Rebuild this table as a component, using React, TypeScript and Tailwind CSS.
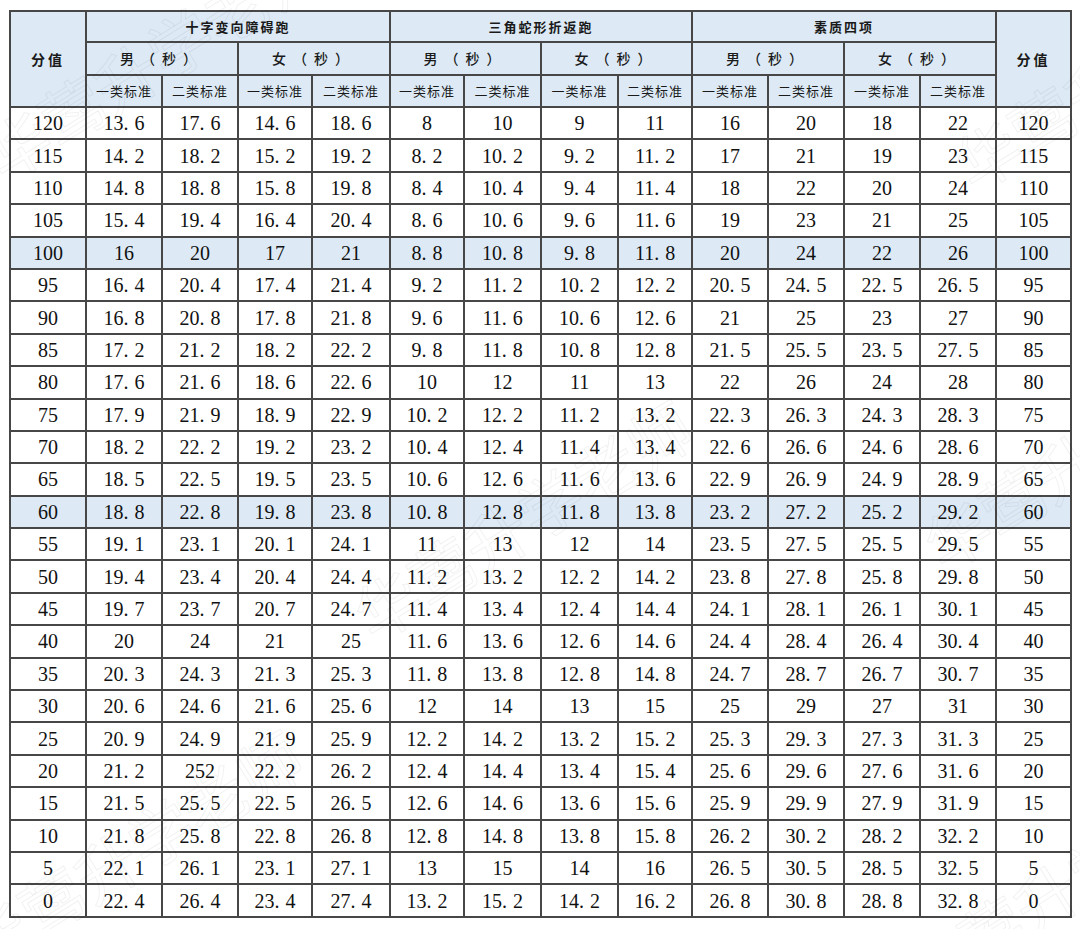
import React from "react";

const rows: string[][] = [
  ["120", "13.6", "17.6", "14.6", "18.6", "8", "10", "9", "11", "16", "20", "18", "22"],
  ["115", "14.2", "18.2", "15.2", "19.2", "8.2", "10.2", "9.2", "11.2", "17", "21", "19", "23"],
  ["110", "14.8", "18.8", "15.8", "19.8", "8.4", "10.4", "9.4", "11.4", "18", "22", "20", "24"],
  ["105", "15.4", "19.4", "16.4", "20.4", "8.6", "10.6", "9.6", "11.6", "19", "23", "21", "25"],
  ["100", "16", "20", "17", "21", "8.8", "10.8", "9.8", "11.8", "20", "24", "22", "26"],
  ["95", "16.4", "20.4", "17.4", "21.4", "9.2", "11.2", "10.2", "12.2", "20.5", "24.5", "22.5", "26.5"],
  ["90", "16.8", "20.8", "17.8", "21.8", "9.6", "11.6", "10.6", "12.6", "21", "25", "23", "27"],
  ["85", "17.2", "21.2", "18.2", "22.2", "9.8", "11.8", "10.8", "12.8", "21.5", "25.5", "23.5", "27.5"],
  ["80", "17.6", "21.6", "18.6", "22.6", "10", "12", "11", "13", "22", "26", "24", "28"],
  ["75", "17.9", "21.9", "18.9", "22.9", "10.2", "12.2", "11.2", "13.2", "22.3", "26.3", "24.3", "28.3"],
  ["70", "18.2", "22.2", "19.2", "23.2", "10.4", "12.4", "11.4", "13.4", "22.6", "26.6", "24.6", "28.6"],
  ["65", "18.5", "22.5", "19.5", "23.5", "10.6", "12.6", "11.6", "13.6", "22.9", "26.9", "24.9", "28.9"],
  ["60", "18.8", "22.8", "19.8", "23.8", "10.8", "12.8", "11.8", "13.8", "23.2", "27.2", "25.2", "29.2"],
  ["55", "19.1", "23.1", "20.1", "24.1", "11", "13", "12", "14", "23.5", "27.5", "25.5", "29.5"],
  ["50", "19.4", "23.4", "20.4", "24.4", "11.2", "13.2", "12.2", "14.2", "23.8", "27.8", "25.8", "29.8"],
  ["45", "19.7", "23.7", "20.7", "24.7", "11.4", "13.4", "12.4", "14.4", "24.1", "28.1", "26.1", "30.1"],
  ["40", "20", "24", "21", "25", "11.6", "13.6", "12.6", "14.6", "24.4", "28.4", "26.4", "30.4"],
  ["35", "20.3", "24.3", "21.3", "25.3", "11.8", "13.8", "12.8", "14.8", "24.7", "28.7", "26.7", "30.7"],
  ["30", "20.6", "24.6", "21.6", "25.6", "12", "14", "13", "15", "25", "29", "27", "31"],
  ["25", "20.9", "24.9", "21.9", "25.9", "12.2", "14.2", "13.2", "15.2", "25.3", "29.3", "27.3", "31.3"],
  ["20", "21.2", "252", "22.2", "26.2", "12.4", "14.4", "13.4", "15.4", "25.6", "29.6", "27.6", "31.6"],
  ["15", "21.5", "25.5", "22.5", "26.5", "12.6", "14.6", "13.6", "15.6", "25.9", "29.9", "27.9", "31.9"],
  ["10", "21.8", "25.8", "22.8", "26.8", "12.8", "14.8", "13.8", "15.8", "26.2", "30.2", "28.2", "32.2"],
  ["5", "22.1", "26.1", "23.1", "27.1", "13", "15", "14", "16", "26.5", "30.5", "28.5", "32.5"],
  ["0", "22.4", "26.4", "23.4", "27.4", "13.2", "15.2", "14.2", "16.2", "26.8", "30.8", "28.8", "32.8"],
];

const widths = [76, 76, 76, 74, 78, 74, 77, 77, 74, 76, 76, 76, 76, 75];

function Num({ v }: { v: string }) {
  const parts = v.split(".");
  if (parts.length === 1) return <>{v}</>;
  return (
    <>
      {parts[0]}
      <span className="inline-block w-[11px] text-left">.</span>
      {parts[1]}
    </>
  );
}

const cjk = "font-['Noto_Sans_CJK_SC',sans-serif]";
const th = `border-2 border-[#474747] bg-[#ddeaf6] text-[#1a1a1a] text-center align-middle p-0 ${cjk}`;
const td = "border-2 border-[#474747] text-center align-middle p-0 text-[20px] leading-none text-[#111111] font-['Liberation_Serif',serif]";

const marks = [
  { left: -40, top: 10 },
  { left: 330, top: 470 },
  { left: 930, top: 20 },
  { left: 900, top: 400 },
  { left: -60, top: 800 },
  { left: 880, top: 830 },
];

export default function App() {
  return (
    <div className="relative w-[1080px] h-[929px] overflow-hidden bg-white">
      <table className="ml-[9px] mt-[10px] border-collapse table-fixed w-[1061px]">
        <colgroup>
          {widths.map((w, i) => (
            <col key={i} style={{ width: w }} />
          ))}
        </colgroup>
        <thead>
          <tr className="h-[31px]">
            <th rowSpan={3} className={`${th} text-[14px] font-semibold tracking-[3px]`}>分值</th>
            <th colSpan={4} className={`${th} text-[13px] font-semibold tracking-[2px]`}>十字变向障碍跑</th>
            <th colSpan={4} className={`${th} text-[13px] font-semibold tracking-[2px]`}>三角蛇形折返跑</th>
            <th colSpan={4} className={`${th} text-[13px] font-semibold tracking-[2px]`}>素质四项</th>
            <th rowSpan={3} className={`${th} text-[14px] font-semibold tracking-[3px]`}>分值</th>
          </tr>
          <tr className="h-[33px]">
            {[0, 1, 2].map((g) => (
              <React.Fragment key={g}>
                <th colSpan={2} className={`${th} text-[14px] font-medium tracking-[7px]`}>男（秒）</th>
                <th colSpan={2} className={`${th} text-[14px] font-medium tracking-[7px]`}>女（秒）</th>
              </React.Fragment>
            ))}
          </tr>
          <tr className="h-[32px]">
            {[0, 1, 2, 3, 4, 5].map((g) => (
              <React.Fragment key={g}>
                <th className={`${th} text-[13px] font-normal tracking-[1px]`}>一类标准</th>
                <th className={`${th} text-[13px] font-normal tracking-[1px]`}>二类标准</th>
              </React.Fragment>
            ))}
          </tr>
        </thead>
        <tbody>
          {rows.map((r) => {
            const hl = r[0] === "100" || r[0] === "60";
            return (
              <tr key={r[0]} className={`h-[32.4px] ${hl ? "bg-[#ddeaf6]" : "bg-white"}`}>
                {[...r, r[0]].map((v, i) => (
                  <td key={i} className={td}>
                    <Num v={v} />
                  </td>
                ))}
              </tr>
            );
          })}
        </tbody>
      </table>
      <div className="pointer-events-none absolute inset-0">
        {marks.map((m, i) => (
          <div
            key={i}
            className={`absolute whitespace-nowrap text-[64px] font-normal text-transparent [-webkit-text-stroke:1px_rgba(0,0,0,0.06)] -rotate-[32deg] ${cjk}`}
            style={{ left: m.left, top: m.top }}
          >
            华莺升学老师
          </div>
        ))}
      </div>
    </div>
  );
}
